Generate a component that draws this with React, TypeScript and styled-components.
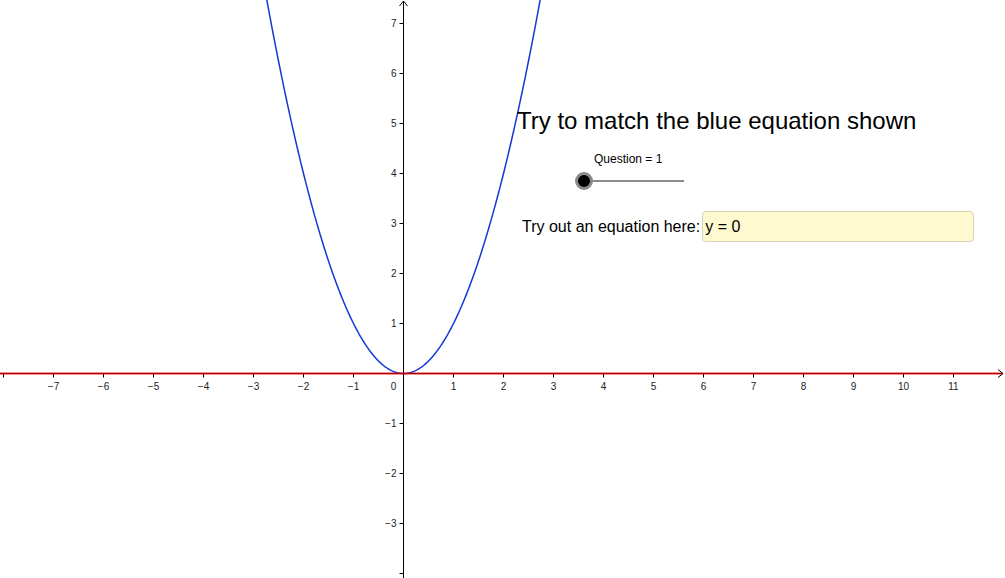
import { createGlobalStyle } from "styled-components";
import styled from "styled-components";

// Graph geometry
const WIDTH = 1005;
const HEIGHT = 578;
const ORIGIN_X = 403.5;
const ORIGIN_Y = 373.5;
const UNIT = 50;

const toX = (x: number) => ORIGIN_X + x * UNIT;
const toY = (y: number) => ORIGIN_Y - y * UNIT;

const X_TICKS = Array.from({ length: 20 }, (_, i) => i - 8);
const Y_TICKS = [-4, -3, -2, -1, 1, 2, 3, 4, 5, 6, 7];

function label(n: number) {
  return n < 0 ? `\u2212${Math.abs(n)}` : `${n}`;
}

function parabolaPath() {
  const points: string[] = [];
  for (let x = -2.8; x <= 2.8001; x += 0.02) {
    points.push(`${toX(x).toFixed(2)},${toY(x * x).toFixed(2)}`);
  }
  return "M" + points.join(" L");
}

export default function App() {
  return (
    <>
      <GlobalStyle />
      <Canvas>
        {/* Coordinate plane */}
        <Graph width={WIDTH} height={HEIGHT} viewBox={`0 0 ${WIDTH} ${HEIGHT}`}>
          {/* Axes */}
          <line x1={0} y1={ORIGIN_Y} x2={WIDTH - 2} y2={ORIGIN_Y} stroke="#000" strokeWidth={1} />
          <line x1={ORIGIN_X} y1={HEIGHT} x2={ORIGIN_X} y2={1} stroke="#000" strokeWidth={1} />
          <polyline
            points={`${WIDTH - 7},${ORIGIN_Y - 4} ${WIDTH - 2},${ORIGIN_Y} ${WIDTH - 7},${ORIGIN_Y + 4}`}
            fill="none"
            stroke="#000"
            strokeWidth={1}
          />
          <polyline
            points={`${ORIGIN_X - 4},6 ${ORIGIN_X},1 ${ORIGIN_X + 4},6`}
            fill="none"
            stroke="#000"
            strokeWidth={1}
          />
          {X_TICKS.filter((n) => n !== 0).map((n) => (
            <g key={`x${n}`}>
              <line x1={toX(n)} y1={ORIGIN_Y} x2={toX(n)} y2={ORIGIN_Y + 4} stroke="#000" strokeWidth={1} />
              {n >= -7 && n <= 11 && (
                <TickText x={toX(n)} y={ORIGIN_Y + 16} textAnchor="middle">
                  {label(n)}
                </TickText>
              )}
            </g>
          ))}
          <TickText x={ORIGIN_X - 10} y={ORIGIN_Y + 16} textAnchor="middle">
            0
          </TickText>
          {Y_TICKS.map((n) => (
            <g key={`y${n}`}>
              <line x1={ORIGIN_X - 4} y1={toY(n)} x2={ORIGIN_X} y2={toY(n)} stroke="#000" strokeWidth={1} />
              {n > -4 && (
                <TickText x={ORIGIN_X - 7} y={toY(n) + 3.5} textAnchor="end">
                  {label(n)}
                </TickText>
              )}
            </g>
          ))}
          {/* y = x^2 */}
          <path d={parabolaPath()} fill="none" stroke="#1538d6" strokeWidth={1.5} />
          {/* y = 0 (user equation) */}
          <line x1={0} y1={ORIGIN_Y} x2={WIDTH - 3} y2={ORIGIN_Y} stroke="#d40000" strokeWidth={2} opacity={0.85} />
        </Graph>

        {/* Overlay objects */}
        <Title>Try to match the blue equation shown</Title>

        <Slider>
          <SliderCaption>Question = 1</SliderCaption>
          <SliderTrack>
            <SliderKnob />
          </SliderTrack>
        </Slider>

        <InputRow>
          <InputLabel htmlFor="equation">Try out an equation here:</InputLabel>
          <EquationInput id="equation" defaultValue="y = 0" />
        </InputRow>
      </Canvas>
    </>
  );
}

const GlobalStyle = createGlobalStyle`
  html, body {
    margin: 0;
    padding: 0;
    background: #fff;
    font-family: "Liberation Sans", Arial, sans-serif;
  }
`;

const Canvas = styled.div`
  position: relative;
  width: ${WIDTH}px;
  height: ${HEIGHT}px;
  overflow: hidden;
  background: #fff;
`;

const Graph = styled.svg`
  display: block;
`;

const TickText = styled.text`
  font-family: "Liberation Sans", Arial, sans-serif;
  font-size: 10px;
  fill: #222;
`;

const Title = styled.div`
  position: absolute;
  left: 517px;
  top: 106px;
  font-size: 24px;
  line-height: 30px;
  color: #000;
  white-space: nowrap;
`;

const Slider = styled.div`
  position: absolute;
  left: 577px;
  top: 152px;
  width: 108px;
`;

const SliderCaption = styled.div`
  margin-left: 17px;
  font-size: 12px;
  line-height: 15px;
  color: #000;
`;

const SliderTrack = styled.div`
  position: relative;
  margin-top: 13px;
  margin-left: 7px;
  width: 100px;
  height: 2px;
  background: #8c8c8c;
`;

const SliderKnob = styled.div`
  position: absolute;
  left: -9px;
  top: -8px;
  width: 12px;
  height: 12px;
  border-radius: 50%;
  background: #000;
  border: 3px solid #8a8a8a;
`;

const InputRow = styled.div`
  position: absolute;
  left: 522px;
  top: 211px;
  display: flex;
  align-items: center;
`;

const InputLabel = styled.label`
  font-size: 16px;
  color: #000;
  white-space: nowrap;
  margin-right: 2px;
`;

const EquationInput = styled.input`
  box-sizing: border-box;
  width: 272px;
  height: 31px;
  padding: 0 2px;
  border: 1px solid #d6d3b8;
  border-radius: 4px;
  background: #fff9d0;
  font-family: "Liberation Sans", Arial, sans-serif;
  font-size: 16px;
  color: #000;
  outline: none;
`;
